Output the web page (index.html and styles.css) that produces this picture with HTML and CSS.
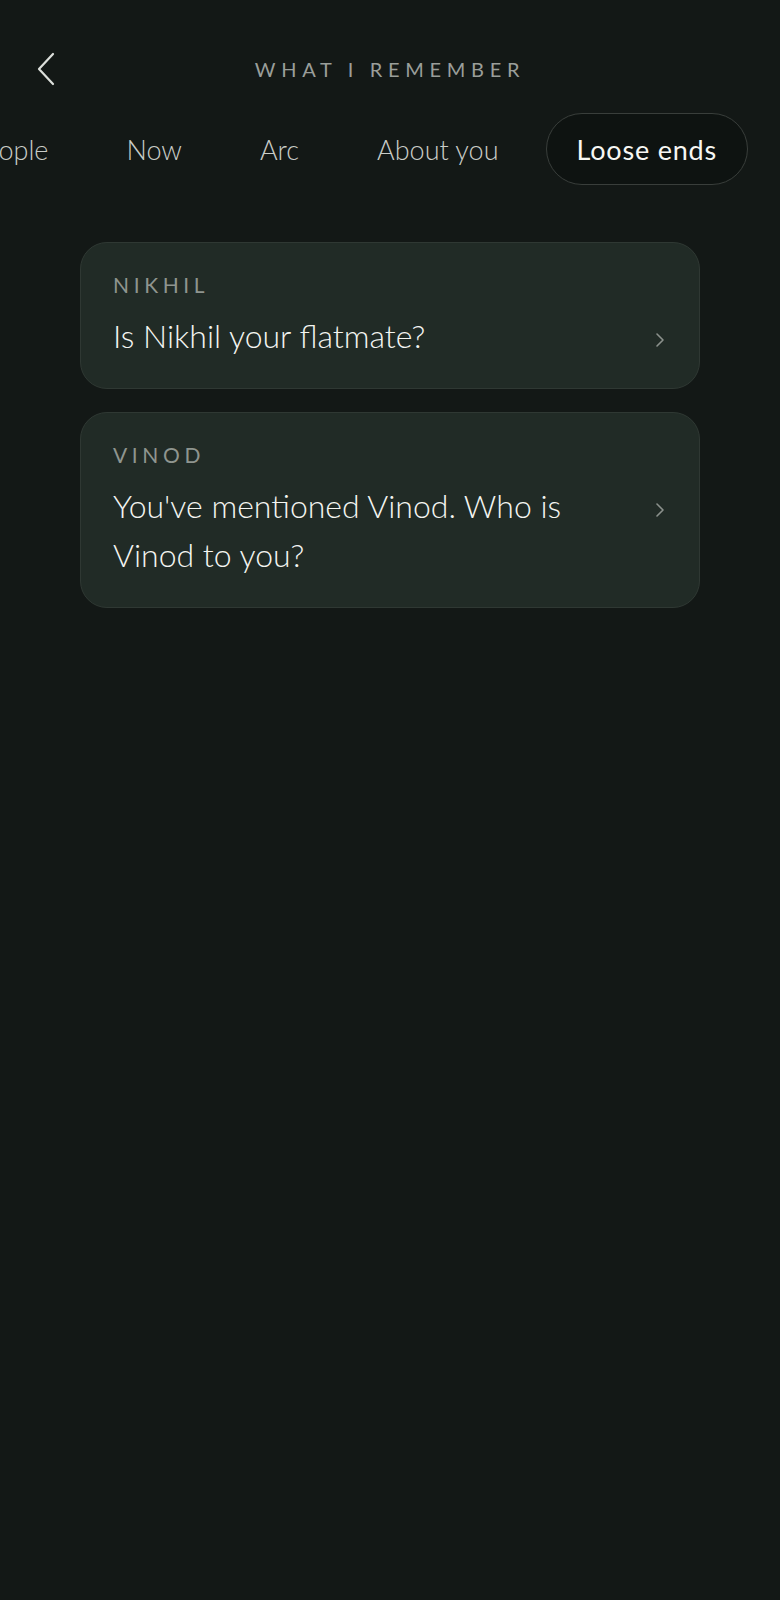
FILE: index.html
```html
<!DOCTYPE html>
<html>
<head>
	<title>What I remember</title>
	<link rel="stylesheet" href="styles.css">
</head>
<body>
<div class="screen">
  <div class="header">
    <a class="back" href="#">
      <svg width="20" height="34" viewBox="0 0 20 34"><path d="M17 2 L3 17 L17 32" fill="none" stroke="#dcdfdb" stroke-width="2.2" stroke-linecap="round" stroke-linejoin="round"/></svg>
    </a>
    <h1>What I remember</h1>
  </div>

  <div class="tabs">
    <div class="tab">People</div>
    <div class="tab">Now</div>
    <div class="tab">Arc</div>
    <div class="tab">About you</div>
    <div class="tab active">Loose ends</div>
  </div>

  <div class="cards">
    <div class="card">
      <div class="label">Nikhil</div>
      <div class="question">
        <span class="text">Is Nikhil your flatmate?</span>
        <svg class="arrow" width="10" height="16" viewBox="0 0 10 16"><path d="M2 2 L8 8 L2 14" fill="none" stroke="#8b918c" stroke-width="1.6" stroke-linecap="round" stroke-linejoin="round"/></svg>
      </div>
    </div>
    <div class="card">
      <div class="label">Vinod</div>
      <div class="question">
        <span class="text">You've mentioned Vinod. Who is Vinod to you?</span>
        <svg class="arrow" width="10" height="16" viewBox="0 0 10 16"><path d="M2 2 L8 8 L2 14" fill="none" stroke="#8b918c" stroke-width="1.6" stroke-linecap="round" stroke-linejoin="round"/></svg>
      </div>
    </div>
  </div>
</div>
</body>
</html>
```

FILE: styles.css
```css
html {
  box-sizing: border-box;
}
*,
*:before,
*:after {
  box-sizing: inherit;
}
body {
  margin: 0;
  background-color: #131816;
  font-family: 'Lato', 'Liberation Sans', sans-serif;
  color: #f2f3ef;
}
.screen {
  width: 780px;
  min-height: 1600px;
  background-color: #131816;
}
.header {
  position: relative;
  height: 44px;
  margin-top: 47px;
  display: flex;
  align-items: center;
  justify-content: center;
}
.back {
  position: absolute;
  left: 36px;
  top: 5px;
  display: block;
}
h1 {
  margin: 0;
  font-size: 20px;
  font-weight: 400;
  letter-spacing: 0.285em;
  text-transform: uppercase;
  color: #9a9e9a;
}

.tabs {
  margin-top: 22px;
  padding-right: 32px;
  display: flex;
  justify-content: flex-end;
  gap: 16px;
  overflow: hidden;
}
.tab {
  flex: none;
  height: 72px;
  padding: 0 30px;
  display: flex;
  align-items: center;
  font-size: 27px;
  font-weight: 300;
  color: #c9ccc7;
  border: 1px solid transparent;
  border-radius: 36px;
  white-space: nowrap;
}
.tab.active {
  color: #f7f7f3;
  font-weight: 400;
  letter-spacing: 0.8px;
  background-color: #0e1311;
  border-color: #393e3b;
}

.cards {
  margin: 57px 80px 0;
  display: flex;
  flex-direction: column;
  gap: 23px;
}
.card {
  background-color: #212b26;
  border: 1px solid #2f3833;
  border-radius: 27px;
  padding: 29px 34px 28px 32px;
}
.label {
  font-size: 21px;
  line-height: 26px;
  letter-spacing: 0.22em;
  text-transform: uppercase;
  color: #8f958f;
}
.question {
  margin-top: 13px;
  display: flex;
  align-items: flex-start;
  justify-content: space-between;
}
.text {
  width: 500px;
  font-size: 32px;
  line-height: 49px;
  font-weight: 300;
  color: #f4f5f1;
}
.arrow {
  flex: none;
  margin-top: 21px;
}
```
